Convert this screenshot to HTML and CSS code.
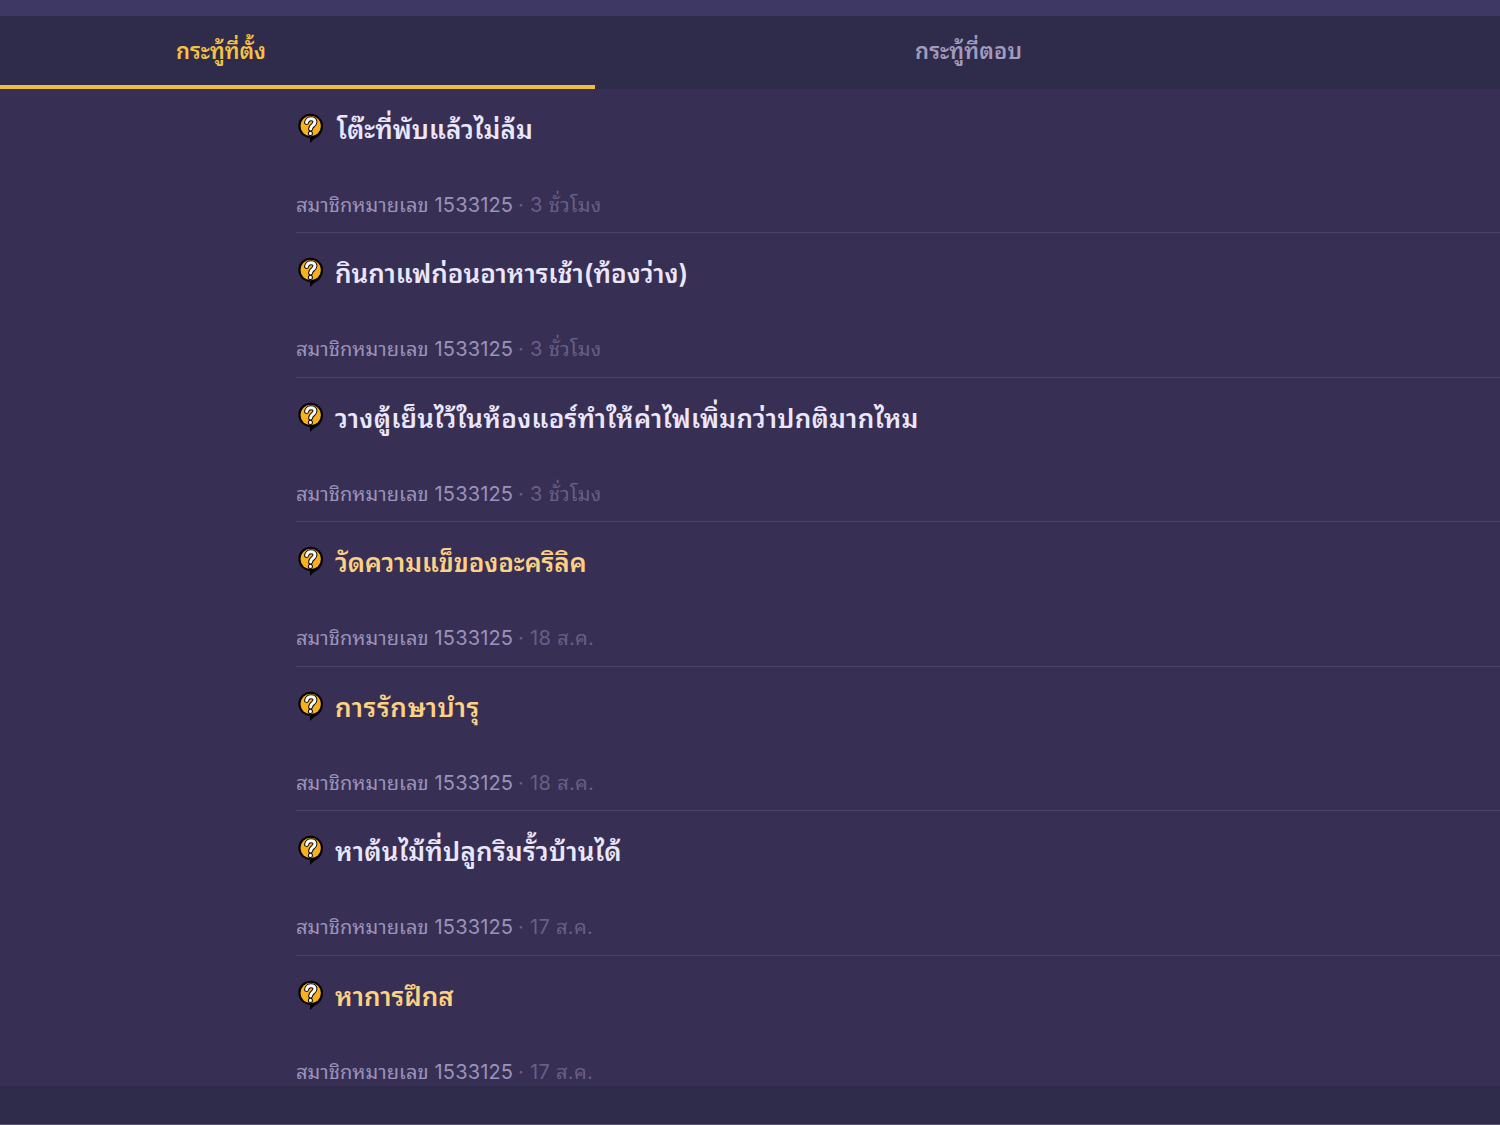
FILE: index.html
```html
<!DOCTYPE html>
<html lang="th">
<head>
  <meta charset="utf-8">
  <title>กระทู้ที่ตั้ง</title>
  <link rel="stylesheet" href="styles.css">
</head>
<body>
<svg class="symbols">
  <symbol id="question" viewBox="0 0 26 31">
    <path d="M12.500.8C5.800.8.3 6 .3 12.800c0 6.400 4.700 11.300 11.700 12.200V30l4.500-4.200c5-1.800 8.500-6.800 8.500-13C25 6 19.200.8 12.500.8z" fill="#050306"/>
    <circle cx="12.700" cy="13" r="10.200" fill="#f9b01e"/>
    <path d="M8.600 9.400c.8-5.200 9-4.800 8.300-.1-.4 3.200-4.200 3.200-4.300 6.600M12.400 20.300v.3" fill="none" stroke="#0a0608" stroke-width="5" stroke-linecap="round"/>
    <path d="M8.600 9.400c.8-5.200 9-4.800 8.300-.1-.4 3.200-4.200 3.200-4.300 6.600M12.400 20.300v.3" fill="none" stroke="#fff" stroke-width="3" stroke-linecap="round"/>
  </symbol>
</svg>
<div class="topbar"></div>
<div class="tabs">
  <div class="tab active"><span>กระทู้ที่ตั้ง</span></div>
  <div class="tab second"><span>กระทู้ที่ตอบ</span></div>
</div>
<div class="topics">
  <div class="topic">
    <div class="title"><svg class="icon"><use href="#question"/></svg><span class="t1">โต๊ะที่พับแล้วไม่ล้ม</span></div>
    <div class="meta"><span class="author">สมาชิกหมายเลข</span><span class="num">1533125</span><span class="time">· 3 ชั่วโมง</span></div>
  </div>
  <div class="topic">
    <div class="title"><svg class="icon"><use href="#question"/></svg><span class="t2">กินกาแฟก่อนอาหารเช้า(ท้องว่าง)</span></div>
    <div class="meta"><span class="author">สมาชิกหมายเลข</span><span class="num">1533125</span><span class="time">· 3 ชั่วโมง</span></div>
  </div>
  <div class="topic">
    <div class="title"><svg class="icon"><use href="#question"/></svg><span class="t3">วางตู้เย็นไว้ในห้องแอร์ทำให้ค่าไฟเพิ่มกว่าปกติมากไหม</span></div>
    <div class="meta"><span class="author">สมาชิกหมายเลข</span><span class="num">1533125</span><span class="time">· 3 ชั่วโมง</span></div>
  </div>
  <div class="topic visited">
    <div class="title"><svg class="icon"><use href="#question"/></svg><span class="t4">วัดความแข็ของอะคริลิค</span></div>
    <div class="meta"><span class="author">สมาชิกหมายเลข</span><span class="num">1533125</span><span class="time">· 18 ส.ค.</span></div>
  </div>
  <div class="topic visited">
    <div class="title"><svg class="icon"><use href="#question"/></svg><span class="t5">การรักษาบำรุ</span></div>
    <div class="meta"><span class="author">สมาชิกหมายเลข</span><span class="num">1533125</span><span class="time">· 18 ส.ค.</span></div>
  </div>
  <div class="topic">
    <div class="title"><svg class="icon"><use href="#question"/></svg><span class="t6">หาต้นไม้ที่ปลูกริมรั้วบ้านได้</span></div>
    <div class="meta"><span class="author">สมาชิกหมายเลข</span><span class="num">1533125</span><span class="time">· 17 ส.ค.</span></div>
  </div>
  <div class="topic visited">
    <div class="title"><svg class="icon"><use href="#question"/></svg><span class="t7">หาการฝึกส</span></div>
    <div class="meta"><span class="author">สมาชิกหมายเลข</span><span class="num">1533125</span><span class="time">· 17 ส.ค.</span></div>
  </div>
</div>
<div class="bottombar"></div>
</body>
</html>
```

FILE: styles.css
```css
* {
  box-sizing: border-box;
}

body {
  margin: 0;
  height: 1125px;
  overflow: hidden;
  display: flex;
  flex-direction: column;
  background: #373054;
  font-family: Inter, "Noto Sans Thai Looped", Loma, "Noto Sans Thai", sans-serif;
}

.symbols {
  display: none;
}

.topbar {
  flex: none;
  height: 16px;
  background: #3d3964;
}

.tabs {
  flex: none;
  display: flex;
  height: 72.500px;
  background: #2f2b4a;
}

.tab {
  width: 595px;
  padding: 17px 0 0 176px;
  font-size: 22px;
  font-weight: 600;
  line-height: 36px;
  white-space: nowrap;
  color: #a39bbd;
}

.tab.active {
  color: #f6c244;
  border-bottom: 4px solid #f0bd3d;
}

.tab.second {
  width: 905px;
  padding-left: 320px;
  letter-spacing: .15px;
}

.topics {
  flex: none;
  height: 997.500px;
  overflow: hidden;
  padding-left: 296px;
}

.topic {
  height: 144.500px;
  border-bottom: 1px solid #4a4468;
}

.title {
  display: flex;
  align-items: center;
  gap: 11px;
  height: 79px;
  padding-left: 2px;
  font-size: 26px;
  font-weight: 600;
  white-space: nowrap;
  color: #ebe6fb;
}

.title span {
  padding-bottom: 3px;
}

.t1 { letter-spacing: .08px; margin-left: 2px; }
.t2 { letter-spacing: 0; }
.t3 { letter-spacing: .27px; }
.t4 { letter-spacing: -.1px; }
.t5 { letter-spacing: .6px; }
.t6 { letter-spacing: .22px; }
.t7 { letter-spacing: .05px; }

.visited .title {
  color: #fdd184;
}

.icon {
  flex: none;
  width: 26px;
  height: 31px;
}

.meta {
  display: flex;
  height: 76px;
  line-height: 75px;
  font-size: 20px;
  white-space: pre;
  color: #9c92bb;
}

.author {
  letter-spacing: .05px;
}

.num {
  margin-left: 6px;
  letter-spacing: .15px;
}

.time {
  margin-left: 5px;
  letter-spacing: .3px;
  color: #685f86;
}

.bottombar {
  flex: none;
  height: 39px;
  background: #2f2b4a;
  border-bottom: 1px solid #5b5574;
}
```
